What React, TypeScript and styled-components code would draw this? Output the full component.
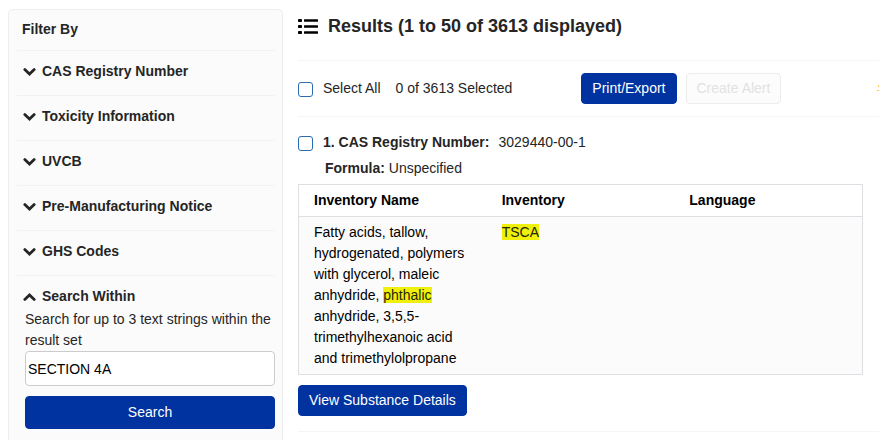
import { useState } from "react";
import styled, { createGlobalStyle, css } from "styled-components";

const GlobalStyle = createGlobalStyle`
  * { box-sizing: border-box; }
  body {
    margin: 0;
    background: #fff;
    color: #252525;
    font: 14px/21px "Liberation Sans", Arial, sans-serif;
  }
  button, input { font: inherit; }
`;

const Page = styled.div`
  display: flex;
  align-items: stretch;
  gap: 15px;
  min-height: 100vh;
  padding: 9px 0 0 8px;
`;

const Sidebar = styled.aside`
  flex: 0 0 275px;
  padding: 0 7px 10px 8px;
  border: 1px solid #ededed;
  border-bottom: 0;
  border-radius: 5px 5px 0 0;
  background: #fbfbfb;
`;

const SidebarTitle = styled.h2`
  margin: 0;
  padding: 9px 5px 10px;
  font-size: 14px;
  line-height: 21px;
`;

const FilterSection = styled.section`
  border-top: 1px solid #f2f2f2;
`;

const FilterToggle = styled.button<{ $open?: boolean }>`
  display: flex;
  align-items: center;
  gap: 6px;
  width: 100%;
  padding: ${(p) => (p.$open ? "10px 6px 2px" : "10px 6px 13px")};
  border: 0;
  background: none;
  color: inherit;
  font-weight: bold;
  line-height: 21px;
  text-align: left;
  cursor: pointer;
`;

const SearchForm = styled.form`
  display: flex;
  flex-direction: column;
  padding-left: 8px;
`;

const SearchInput = styled.input`
  width: 100%;
  height: 35px;
  margin-bottom: 10px;
  padding: 1px 2px;
  border: 1px solid #ccc;
  border-radius: 4px;
  background: #fff;
  color: #000;
`;

const Button = styled.button<{ $wide?: boolean }>`
  padding: 4px 10px;
  border: 1px solid #0033a0;
  border-radius: 4px;
  background: #0033a0;
  color: #fff;
  line-height: 21px;
  cursor: pointer;
  ${(p) => p.$wide && css`
    width: 100%;
    padding: 5px 10px;
  `}
  &:disabled {
    border-color: #ececec;
    background: #fcfcfc;
    color: #e2e2e2;
    cursor: default;
  }
`;

const Results = styled.main`
  flex: 1;
  min-width: 0;
`;

const ResultsHeader = styled.header`
  display: flex;
  align-items: center;
  gap: 10px;
  padding: 5px 0 22px;
`;

const ResultsTitle = styled.h1`
  margin: 0;
  font-size: 18px;
  line-height: 24px;
`;

const Toolbar = styled.div`
  display: flex;
  align-items: center;
  padding: 12px 0;
  border: solid #f5f5f5;
  border-width: 1px 0;
`;

const CheckLabel = styled.label<{ $bold?: boolean }>`
  display: flex;
  align-items: center;
  gap: 10px;
  font-weight: ${(p) => (p.$bold ? "bold" : "normal")};
`;

const Checkbox = styled.input`
  appearance: none;
  width: 15px;
  height: 15px;
  margin: 2px 0 0;
  border: 1px solid #2b6cb0;
  border-radius: 3px;
  background: #fff;
  &:checked { background: #0033a0; }
`;

const SelectedCount = styled.span`
  margin-left: 15px;
`;

const Actions = styled.div`
  display: flex;
  gap: 9px;
  margin-left: 69px;
`;

const Marker = styled.svg`
  margin-left: auto;
`;

const Result = styled.article`
  padding: 15px 0;
  border-bottom: 1px solid #f5f5f5;
`;

const ResultHeading = styled.div`
  display: flex;
  gap: 9px;
`;

const Formula = styled.div`
  padding: 5px 0 5px 27px;
`;

const TableFrame = styled.div`
  margin: 0 16px 10px 0;
  border: 1px solid #dedfe3;
  color: #000;
`;

const InventoryTable = styled.table`
  width: 100%;
  table-layout: fixed;
  border-collapse: separate;
  border-spacing: 0;
  text-align: left;
  th, td {
    padding: 5px 15px;
    vertical-align: top;
  }
  th { border-bottom: 1px solid #dedfe3; }
  td { background: #fbfbfb; }
`;

const Highlight = styled.mark`
  background: #f0f00f;
  color: #252500;
`;

const Chevron = ({ up }: { up?: boolean }) => (
  <svg width="13" height="9" viewBox="0 0 13 9" aria-hidden="true">
    <path
      d={up ? "M1.8 7.4 6.5 3l4.7 4.4" : "M1.8 2.6 6.5 7l4.7-4.4"}
      fill="none"
      stroke="#252525"
      strokeWidth="2.8"
      strokeLinecap="round"
    />
  </svg>
);

const ListIcon = () => (
  <svg width="20" height="16" viewBox="0 0 20 16" aria-hidden="true">
    {[1, 7, 13].map((y) => (
      <g key={y}>
        <rect y={y} width="4" height="3" rx="0.8" />
        <rect x="6" y={y + 0.3} width="14" height="2.4" rx="0.5" />
      </g>
    ))}
  </svg>
);

const filters = [
  "CAS Registry Number",
  "Toxicity Information",
  "UVCB",
  "Pre-Manufacturing Notice",
  "GHS Codes",
];

export default function App() {
  const [query, setQuery] = useState("SECTION 4A");
  return (
    <>
      <GlobalStyle />
      <Page>
        <Sidebar>
          <SidebarTitle>Filter By</SidebarTitle>
          {filters.map((name) => (
            <FilterSection key={name}>
              <FilterToggle type="button" aria-expanded={false}>
                <Chevron />
                {name}
              </FilterToggle>
            </FilterSection>
          ))}
          <FilterSection>
            <FilterToggle type="button" aria-expanded $open>
              <Chevron up />
              Search Within
            </FilterToggle>
            <SearchForm onSubmit={(e) => e.preventDefault()}>
              <label htmlFor="within">Search for up to 3 text strings within the result set</label>
              <SearchInput id="within" value={query} onChange={(e) => setQuery(e.target.value)} />
              <Button $wide type="submit">Search</Button>
            </SearchForm>
          </FilterSection>
        </Sidebar>
        <Results>
          <ResultsHeader>
            <ListIcon />
            <ResultsTitle>Results (1 to 50 of 3613 displayed)</ResultsTitle>
          </ResultsHeader>
          <Toolbar>
            <CheckLabel>
              <Checkbox type="checkbox" />
              Select All
            </CheckLabel>
            <SelectedCount>0 of 3613 Selected</SelectedCount>
            <Actions>
              <Button type="button">Print/Export</Button>
              <Button type="button" disabled>Create Alert</Button>
            </Actions>
            <Marker width="2" height="8" viewBox="0 0 2 8" aria-hidden="true">
              <path d="M1 0h1v2H1zM0 5h2v1H0z" fill="#ffc15c" />
            </Marker>
          </Toolbar>
          <Result>
            <ResultHeading>
              <CheckLabel $bold>
                <Checkbox type="checkbox" />
                1. CAS Registry Number:
              </CheckLabel>
              <span>3029440-00-1</span>
            </ResultHeading>
            <Formula>
              <b>Formula:</b> Unspecified
            </Formula>
            <TableFrame>
              <InventoryTable>
                <thead>
                  <tr>
                    <th scope="col">Inventory Name</th>
                    <th scope="col">Inventory</th>
                    <th scope="col">Language</th>
                  </tr>
                </thead>
                <tbody>
                  <tr>
                    <td>
                      Fatty acids, tallow, hydrogenated, polymers with glycerol, maleic anhydride,{" "}
                      <Highlight>phthalic</Highlight> anhydride, 3,5,5-trimethylhexanoic acid and
                      trimethylolpropane
                    </td>
                    <td><Highlight>TSCA</Highlight></td>
                    <td />
                  </tr>
                </tbody>
              </InventoryTable>
            </TableFrame>
            <Button type="button">View Substance Details</Button>
          </Result>
        </Results>
      </Page>
    </>
  );
}
